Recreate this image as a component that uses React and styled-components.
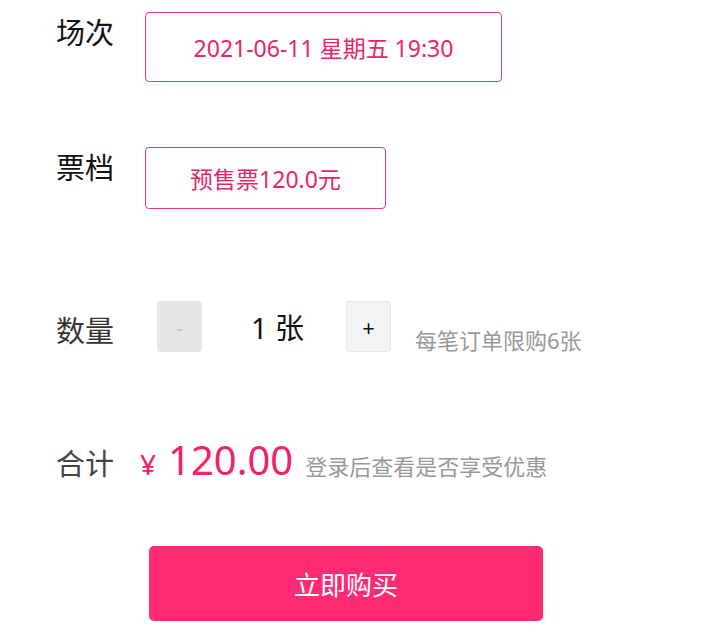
import React, { useState } from 'react';
import styled, { createGlobalStyle } from 'styled-components';

const GlobalStyle = createGlobalStyle`
  body {
    margin: 8px;
    background: #fff;
    font-family: "Noto Sans", "Noto Sans CJK SC", sans-serif;
  }
`;

const Page = styled.div`
  padding: 4px 0 0 48px;
  display: flex;
  flex-direction: column;
`;

const Row = styled.div`
  display: flex;
  align-items: ${(props) => props.align || 'flex-start'};
  margin-bottom: ${(props) => props.gap || 0}px;
`;

const Label = styled.div`
  width: ${(props) => props.width || 89}px;
  flex-shrink: 0;
  font-size: 29px;
  line-height: 42px;
  color: ${(props) => props.color || '#111'};
  margin-top: ${(props) => props.top || 0}px;
`;

const Option = styled.div`
  display: flex;
  justify-content: center;
  align-items: center;
  width: ${(props) => props.width}px;
  height: ${(props) => props.height}px;
  box-sizing: border-box;
  border: 1px solid #e33d7c;
  border-radius: 4px;
  color: #e8246b;
  font-size: 23px;
`;

const StepButton = styled.div`
  width: 45px;
  height: 51px;
  box-sizing: border-box;
  border-radius: 3px;
  border: 1px solid ${(props) => (props.disabled ? '#e6e6e6' : '#e4e6ea')};
  background: ${(props) => (props.disabled ? '#e6e6e6' : '#f2f3f5')};
  color: ${(props) => (props.disabled ? '#c8c8c8' : '#111')};
  display: flex;
  justify-content: center;
  align-items: center;
  font-size: 22px;
  cursor: pointer;
`;

const Count = styled.div`
  width: 144px;
  box-sizing: border-box;
  padding-left: 7px;
  text-align: center;
  font-size: 29px;
  line-height: 42px;
  margin-top: 6px;
  color: #111;
`;

const Hint = styled.div`
  font-size: 22px;
  line-height: 32px;
  color: #999;
  margin-left: ${(props) => props.left || 0}px;
  margin-top: ${(props) => props.top || 0}px;
`;

const Yen = styled.span`
  font-size: 28px;
  color: #f0226a;
  margin-right: 12px;
`;

const Amount = styled.span`
  font-size: 40px;
  color: #f0226a;
  margin-right: 12px;
`;

const BuyButton = styled.div`
  width: 394px;
  height: 75px;
  margin-left: 93px;
  border-radius: 5px;
  background: #ff2a74;
  color: #fff;
  font-size: 26px;
  display: flex;
  justify-content: center;
  align-items: center;
  cursor: pointer;
`;

export default function App() {
  const [count, setCount] = useState(1);
  const price = 120;

  return (
    <>
      <GlobalStyle />
      <Page>
        <Row gap={65}>
          <Label>场次</Label>
          <Option width={357} height={70}>2021-06-11 星期五 19:30</Option>
        </Row>
        <Row gap={92}>
          <Label>票档</Label>
          <Option width={241} height={62}>预售票120.0元</Option>
        </Row>
        <Row gap={76}>
          <Label color="#333" width={101} top={9}>数量</Label>
          <StepButton disabled={count <= 1} onClick={() => count > 1 && setCount(count - 1)}>-</StepButton>
          <Count>{count} 张</Count>
          <StepButton onClick={() => count < 6 && setCount(count + 1)}>+</StepButton>
          <Hint left={24} top={23}>每笔订单限购6张</Hint>
        </Row>
        <Row align="baseline" gap={59}>
          <Label color="#444" width={84}>合计</Label>
          <Yen>¥</Yen>
          <Amount>{(price * count).toFixed(2)}</Amount>
          <Hint>登录后查看是否享受优惠</Hint>
        </Row>
        <BuyButton>立即购买</BuyButton>
      </Page>
    </>
  );
}
